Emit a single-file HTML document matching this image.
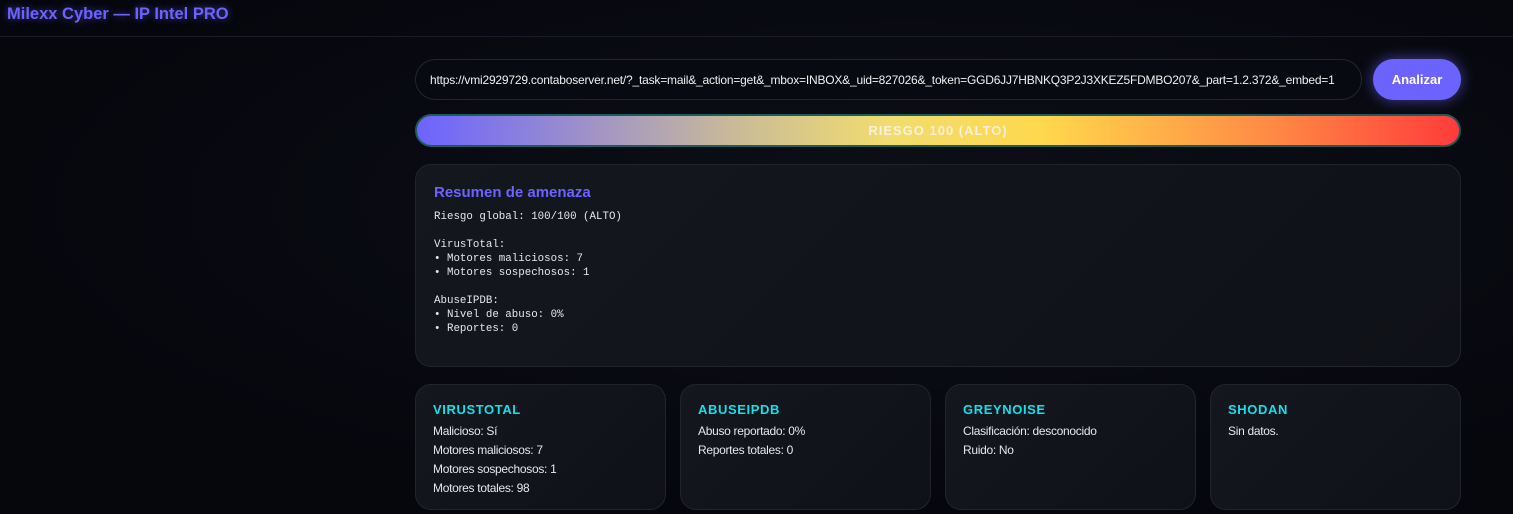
<!DOCTYPE html>
<html><head><meta charset="utf-8"><style>
*{box-sizing:border-box;margin:0;padding:0}
body{width:1513px;height:514px;overflow:hidden;background:radial-gradient(ellipse at 60% 40%,#0d0f18 0%,#06070d 70%);font-family:"Liberation Sans",sans-serif;color:#e6e6f0;position:relative}
.hdr{position:absolute;left:0;top:0;width:1513px;height:37px;border-bottom:1px solid #1b1d26}
.hdr h1{position:absolute;left:7px;top:5px;font-size:16.5px;font-weight:bold;color:#6c63ff;text-shadow:0 0 8px rgba(108,99,255,.6)}
.inp{position:absolute;left:415px;top:59px;width:947px;height:41px;border:1px solid #23252f;border-radius:21px;background:#080a12;font-size:12px;color:#f0f0f0;padding:13px 0 0 14px;white-space:nowrap;overflow:hidden;letter-spacing:-0.2px}
.btn{position:absolute;left:1373px;top:59px;width:88px;height:41px;border-radius:21px;background:#6c63ff;box-shadow:0 0 14px rgba(108,99,255,.6);color:#fff;font-weight:bold;font-size:13px;text-align:center;line-height:41px}
.bar{position:absolute;left:415px;top:114px;width:1046px;height:33px;border-radius:17px;border:2px solid #1f5a5c;background:linear-gradient(90deg,#6c63ff 0%,#c8b99a 30%,#f0dc70 45%,#ffd84d 60%,#ff8a45 82%,#ff3b3b 100%);text-align:center;line-height:29px;font-size:13px;font-weight:bold;letter-spacing:1px;color:#f8f0d8}
.card{position:absolute;border:1px solid #22242c;border-radius:16px;background:linear-gradient(135deg,#15171f,#0f1118)}
.sum{left:415px;top:164px;width:1046px;height:203px}
.sum h2{position:absolute;left:18px;top:19px;font-size:15px;color:#6c63ff}
.sum pre{position:absolute;left:18px;top:45px;font-family:"Liberation Mono",monospace;font-size:10.8px;line-height:14px;color:#e6e6f0}
.sm{top:384px;width:251px;height:126px}
.sm h3{position:absolute;left:17px;top:17px;font-size:13px;color:#14e0ea;letter-spacing:.6px}
.sm div{position:absolute;left:17px;top:37px;font-size:12px;line-height:19px;color:#e6e6f0;letter-spacing:-0.3px}
</style></head><body>
<div class="hdr"><h1>Milexx Cyber — IP Intel PRO</h1></div>
<div class="inp">https://vmi2929729.contaboserver.net/?_task=mail&amp;_action=get&amp;_mbox=INBOX&amp;_uid=827026&amp;_token=GGD6JJ7HBNKQ3P2J3XKEZ5FDMBO207&amp;_part=1.2.372&amp;_embed=1</div>
<div class="btn">Analizar</div>
<div class="bar">RIESGO 100 (ALTO)</div>
<div class="card sum"><h2>Resumen de amenaza</h2><pre>Riesgo global: 100/100 (ALTO)

VirusTotal:
• Motores maliciosos: 7
• Motores sospechosos: 1

AbuseIPDB:
• Nivel de abuso: 0%
• Reportes: 0</pre></div>
<div class="card sm" style="left:415px"><h3>VIRUSTOTAL</h3><div>Malicioso: Sí<br>Motores maliciosos: 7<br>Motores sospechosos: 1<br>Motores totales: 98</div></div>
<div class="card sm" style="left:680px"><h3>ABUSEIPDB</h3><div>Abuso reportado: 0%<br>Reportes totales: 0</div></div>
<div class="card sm" style="left:945px"><h3>GREYNOISE</h3><div>Clasificación: desconocido<br>Ruido: No</div></div>
<div class="card sm" style="left:1210px"><h3>SHODAN</h3><div>Sin datos.</div></div>
</body></html>
